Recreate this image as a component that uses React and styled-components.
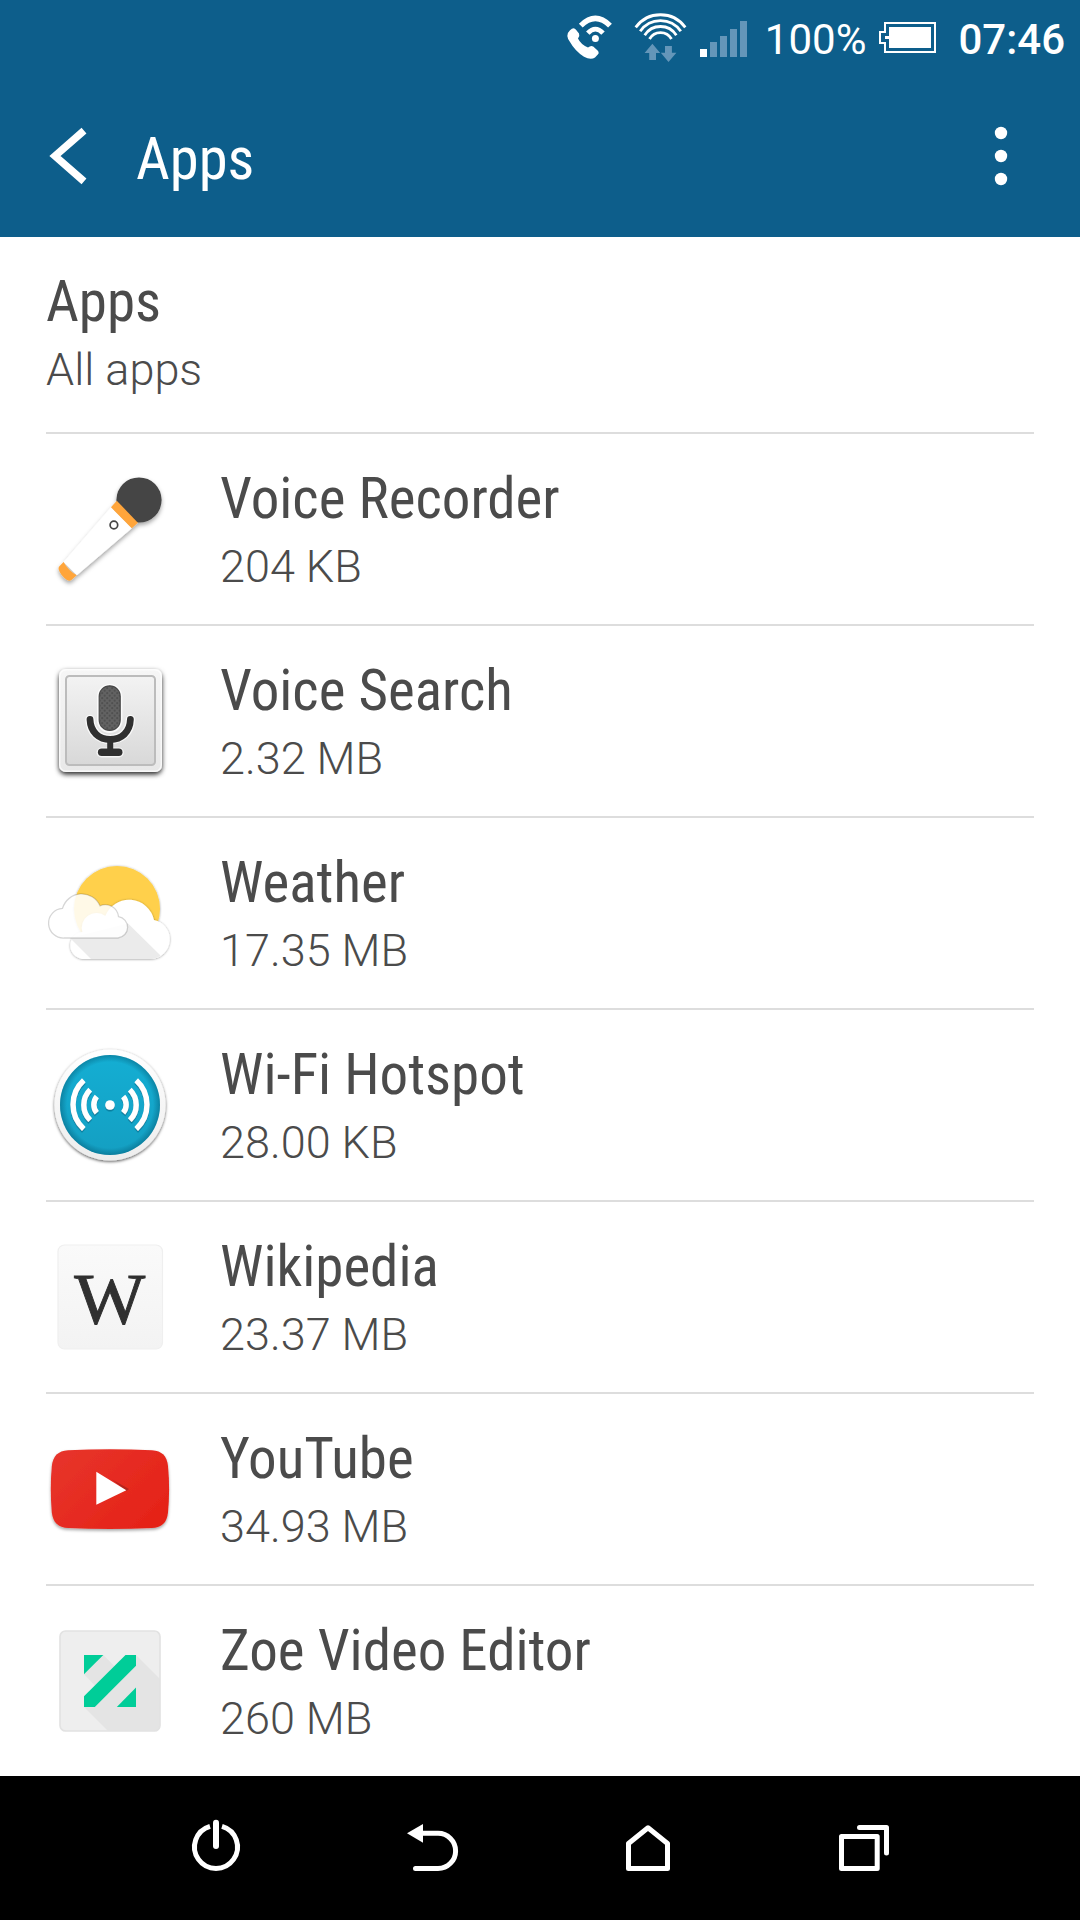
import React from 'react'
import styled, {createGlobalStyle} from 'styled-components'

const GlobalStyle = createGlobalStyle`
  * {
    box-sizing: border-box;
  }

  body {
    margin: 0;
    background: #fff;
    font-family: Roboto, "Liberation Sans", sans-serif;
    color: #4b4b4b;
  }

  svg {
    display: block;
    flex: none;
  }
`

const Screen = styled.div`
  width: 1080px;
  height: 1920px;
  display: flex;
  flex-direction: column;
  overflow: hidden;
`

const Header = styled.header`
  height: 237px;
  background: #0d5e8b;
  color: #fff;
`

const StatusBar = styled.div`
  height: 76px;
  display: flex;
  align-items: center;
  justify-content: flex-end;
  padding-right: 15px;
`

const StatusIcon = styled.svg`
  width: ${p => p.$w}px;
  height: 52px;
  margin-right: ${p => p.$gap}px;
`

const StatusText = styled.span`
  font-size: 42px;
  line-height: 50px;
  font-weight: ${p => p.$weight || 400};
  margin: 3px ${p => p.$gap || 0}px 0 0;
`

const ActionBar = styled.div`
  height: 160px;
  display: flex;
  align-items: center;
  padding: 0 69px 0 47px;
`

// narrow display face used for all titles
const Condensed = styled.div`
  font-family: "Roboto Condensed", Roboto, sans-serif;
  font-stretch: 75%;
  font-size: ${p => p.$size}px;
  line-height: 60px;
  white-space: nowrap;
`

const BarTitle = styled(Condensed)`
  flex: 1;
  margin: 5px 0 0 45px;
`

const List = styled.main`
  height: 1539px;
  padding: 0 46px;
`

const Row = styled.section`
  height: ${p => p.$head ? 197 : 192}px;
  display: flex;
  align-items: flex-start;
  border-bottom: 2px solid #dddddd;

  &:last-child {
    height: 190px;
    border-bottom: none;
  }
`

const AppIcon = styled.svg`
  width: 128px;
  height: 128px;
  margin: 31px 46px 0 0;
  overflow: visible;
`

const Texts = styled.div`
  padding-top: 35px;
`

const Sub = styled.div`
  font-size: 45px;
  line-height: 50px;
  font-weight: 300;
  margin-top: 13px;
`

const NavBar = styled.nav`
  height: 144px;
  background: #000;
  display: flex;
  padding: 0 108px;
`

const NavButton = styled.div`
  width: 216px;
  display: flex;
  align-items: center;
  justify-content: center;
`

const NavSvg = styled.svg`
  width: 64px;
  height: 64px;
  fill: none;
  stroke: #fff;
  stroke-width: 5;
  stroke-linejoin: round;
`

const VoiceRecorder = () => (
	<AppIcon viewBox="0 0 128 128">
		<defs>
			<filter id="micShadow" x="-20%" y="-20%" width="140%" height="150%">
				<feDropShadow dx="0" dy="2.5" stdDeviation="2" floodColor="#000" floodOpacity="0.36"/>
			</filter>
		</defs>
		<g filter="url(#micShadow)">
			<circle cx="93" cy="35" r="22.6" fill="#454545"/>
			<path d="M65 42.3L85.8 63.3L30.8 110.3L17.6 97Z" fill="#fff"/>
			<path d="M70.8 35.7L91.9 57.7L85.8 63.3L65 42.3Z" fill="#ffa53b"/>
			<path d="M17.6 97Q22.5 106 30.8 110.3L25.4 115Q23.4 116.4 21 115Q14.5 110.5 12.6 104.3Q12.3 102.5 13.4 101.3Z" fill="#ffa53b"/>
		</g>
		<circle cx="67.9" cy="60" r="3.8" fill="none" stroke="#454545" strokeWidth="1.7"/>
	</AppIcon>
)

const VoiceSearch = () => (
	<AppIcon viewBox="0 0 128 128">
		<defs>
			<linearGradient id="vsFace" x1="0" y1="0" x2="0" y2="1">
				<stop offset="0" stopColor="#f3f3f3"/>
				<stop offset="1" stopColor="#d8d8d8"/>
			</linearGradient>
			<linearGradient id="vsFrame" x1="0" y1="0" x2="0" y2="1">
				<stop offset="0" stopColor="#f6f6f6"/>
				<stop offset="1" stopColor="#e8e8e8"/>
			</linearGradient>
			<pattern id="vsMesh" width="5" height="5" patternUnits="userSpaceOnUse">
				<rect width="5" height="5" fill="#626262"/>
				<circle cx="1.2" cy="1.2" r="1.1" fill="#505050"/>
				<circle cx="3.7" cy="3.7" r="1.1" fill="#505050"/>
			</pattern>
			<filter id="vsShadow" x="-20%" y="-20%" width="140%" height="140%">
				<feDropShadow dx="0" dy="2.4" stdDeviation="2.8" floodColor="#000" floodOpacity="0.85"/>
			</filter>
		</defs>
		<rect x="13" y="12" width="103" height="103" rx="7" fill="url(#vsFrame)" filter="url(#vsShadow)"/>
		<rect x="13.7" y="12.7" width="101.6" height="101.6" rx="6.5" fill="none" stroke="#fff" strokeOpacity="0.7" strokeWidth="1.4"/>
		<rect x="20" y="19" width="89" height="89" rx="3.5" fill="url(#vsFace)" stroke="#bcbcbc" strokeWidth="2"/>
		<g fill="none" stroke="#fff" strokeOpacity="0.75" strokeLinecap="round">
			<path d="M44 62.5C44.5 75 53 82.5 64.2 82.5C75.4 82.5 84 75 84.4 62.5" strokeWidth="9.5"/>
			<path d="M55.5 95.5H72.8" strokeWidth="10"/>
		</g>
		<rect x="51" y="27" width="25.4" height="49" rx="12.7" fill="#fff" fillOpacity="0.8"/>
		<rect x="53.2" y="28.8" width="21" height="44.6" rx="10.5" fill="url(#vsMesh)" stroke="#484848" strokeWidth="1.2"/>
		<g fill="none" stroke="#303030" strokeLinecap="round">
			<path d="M44 62.5C44.5 75 53 82.5 64.2 82.5C75.4 82.5 84 75 84.4 62.5" strokeWidth="6.8"/>
			<path d="M64.2 83V94" strokeWidth="6" strokeLinecap="butt"/>
			<path d="M55.6 95.3H72.8" strokeWidth="7.4"/>
		</g>
	</AppIcon>
)

const Weather = () => (
	<AppIcon viewBox="0 0 128 128">
		<defs>
			<filter id="cloudShadow" x="-20%" y="-20%" width="140%" height="140%">
				<feDropShadow dx="0" dy="0.4" stdDeviation="0.9" floodColor="#000" floodOpacity="0.4"/>
			</filter>
		</defs>
		<circle cx="71" cy="60" r="43" fill="#ffd04b" filter="url(#cloudShadow)"/>
		<path
			d="M36 110A13.6 13.6 0 0 1 36.5 83A14.6 14.6 0 0 1 59.3 67A25.5 25.5 0 0 1 108 71A19.7 19.7 0 0 1 105 110Z"
			fill="#fff"
			filter="url(#cloudShadow)"
		/>
		<path d="M24 89L45 109.9H105Q110.5 109.8 114.5 106.5L82 74.5Z" fill="#ebebeb"/>
		<path
			d="M18.3 89A14.7 14.7 0 0 1 16.5 59.4A20 20 0 0 1 54 56.8A13.2 13.2 0 0 1 72.5 67.6A10.8 10.8 0 0 1 72 89Z"
			fill="#fff"
			fillOpacity="0.87"
			stroke="#000"
			strokeOpacity="0.16"
			strokeWidth="1.3"
		/>
	</AppIcon>
)

const Hotspot = () => (
	<AppIcon viewBox="0 0 128 128">
		<defs>
			<linearGradient id="hsFill" x1="0" y1="0" x2="0" y2="1">
				<stop offset="0" stopColor="#14aed3"/>
				<stop offset="1" stopColor="#149fc2"/>
			</linearGradient>
			<radialGradient id="hsEdge">
				<stop offset="0.86" stopColor="#00506a" stopOpacity="0"/>
				<stop offset="1" stopColor="#00506a" stopOpacity="0.42"/>
			</radialGradient>
			<linearGradient id="hsRing" x1="0" y1="0" x2="0" y2="1">
				<stop offset="0" stopColor="#fff"/>
				<stop offset="1" stopColor="#ededed"/>
			</linearGradient>
			<filter id="hsShadow" x="-20%" y="-20%" width="140%" height="140%">
				<feDropShadow dx="0" dy="1.2" stdDeviation="1.8" floodColor="#000" floodOpacity="0.65"/>
			</filter>
			<filter id="hsGlyph" x="-20%" y="-20%" width="140%" height="140%">
				<feDropShadow dx="0" dy="1.6" stdDeviation="0.6" floodColor="#005a78" floodOpacity="0.6"/>
			</filter>
		</defs>
		<circle cx="64" cy="64" r="55.6" fill="url(#hsRing)" filter="url(#hsShadow)"/>
		<circle cx="64" cy="64" r="50" fill="url(#hsFill)"/>
		<circle cx="64" cy="64" r="50" fill="url(#hsEdge)"/>
		<g filter="url(#hsGlyph)" fill="none" stroke="#fff" strokeWidth="5.4">
			<path d="M37.8 39.2A33 33 0 0 0 37.8 88"/>
			<path d="M44.2 48.6A21.5 21.5 0 0 0 44.2 79.2"/>
			<path d="M50.8 55.6A12.5 12.5 0 0 0 50.8 71.8"/>
			<path d="M90.2 39.2A33 33 0 0 1 90.2 88"/>
			<path d="M83.8 48.6A21.5 21.5 0 0 1 83.8 79.2"/>
			<path d="M77.2 55.6A12.5 12.5 0 0 1 77.2 71.8"/>
			<circle cx="64" cy="64" r="4.8" fill="#fff" stroke="none"/>
		</g>
	</AppIcon>
)

const Wikipedia = () => (
	<AppIcon viewBox="0 0 128 128">
		<defs>
			<linearGradient id="wkFill" x1="0" y1="0" x2="0" y2="1">
				<stop offset="0" stopColor="#fafafa"/>
				<stop offset="1" stopColor="#f3f3f3"/>
			</linearGradient>
		</defs>
		<rect x="12" y="12" width="104.5" height="104" rx="6.5" fill="url(#wkFill)" stroke="#efefef" strokeWidth="1.2"/>
		<text
			x="28.3"
			y="90"
			fontFamily="'Liberation Serif', serif"
			fontSize="72"
			textLength="71"
			lengthAdjust="spacingAndGlyphs"
			fill="#303030"
			stroke="#303030"
			strokeWidth="0.9"
		>W</text>
	</AppIcon>
)

const YouTube = () => (
	<AppIcon viewBox="0 0 128 128">
		<defs>
			<linearGradient id="ytFill" x1="0" y1="0" x2="1" y2="0.7">
				<stop offset="0" stopColor="#e7352c"/>
				<stop offset="1" stopColor="#e52318"/>
			</linearGradient>
			<filter id="ytShadow" x="-20%" y="-20%" width="140%" height="150%">
				<feDropShadow dx="0" dy="1.8" stdDeviation="1.6" floodColor="#000" floodOpacity="0.35"/>
			</filter>
		</defs>
		<path
			d="M22 25.3Q64 23.4 106 25.3C116 26 121 31 122 41Q124.2 64 122 87.5C121 97.5 116 102.5 106 103.1Q64 105 22 103.1C12 102.5 7 97.5 5.8 87.5Q3.8 64 5.8 41C7 31 12 26 22 25.3Z"
			fill="url(#ytFill)"
			filter="url(#ytShadow)"
		/>
		<path d="M66 54.5L83 64L80.5 66Z" fill="#b3251d"/>
		<path d="M50.3 46.7L80.3 65.2L50.3 79.8Z" fill="#fff"/>
	</AppIcon>
)

const Zoe = () => (
	<AppIcon viewBox="0 0 128 128">
		<rect x="14" y="14" width="100" height="100" rx="5.5" fill="#eeeeee"/>
		<path d="M90 38L114 62V108.5Q114 114 108.5 114H62L38 90Z" fill="#e4e4e4"/>
		<path d="M57.3 38L68.5 49.2L49 68.7L38 57.3Z" fill="#e4e4e4"/>
		<rect x="14" y="14" width="100" height="100" rx="5.5" fill="none" stroke="#e2e2e2" strokeWidth="1.6"/>
		<g fill="#00cd98">
			<path d="M38 38H57.3L38 57.3Z"/>
			<path d="M79.5 38H90V48.8L48.8 90H38V79.3Z"/>
			<path d="M90 70.6V90H70.8Z"/>
		</g>
	</AppIcon>
)

const apps = [
	{name: 'Voice Recorder', size: '204 KB', Icon: VoiceRecorder},
	{name: 'Voice Search', size: '2.32 MB', Icon: VoiceSearch},
	{name: 'Weather', size: '17.35 MB', Icon: Weather},
	{name: 'Wi-Fi Hotspot', size: '28.00 KB', Icon: Hotspot},
	{name: 'Wikipedia', size: '23.37 MB', Icon: Wikipedia},
	{name: 'YouTube', size: '34.93 MB', Icon: YouTube},
	{name: 'Zoe Video Editor', size: '260 MB', Icon: Zoe}
]

const Status = () => (
	<StatusBar>
		<StatusIcon $w={50} $gap={20} viewBox="0 0 50 52">
			<path
				d="M6 18.2Q9.8 14.4 12 17.8L15 21.6Q16 23.6 14 26.4Q16.5 32 24 35.5Q26.8 33 29.2 34.4L33.6 38.4Q35.6 40.6 33.8 42.6L31 45.4Q27 48.6 20 44.8Q11 39 6 30Q0.8 23 6 18.2Z"
				fill="#fff"
			/>
			<g fill="none" stroke="#fff">
				<path d="M16.8 13.6Q31.4 -0.8 46 13.6" strokeWidth="5.4"/>
				<path d="M23.8 21.2Q31.4 13.2 39 21.2" strokeWidth="4.8"/>
			</g>
			<circle cx="31.4" cy="26.6" r="3.5" fill="#fff"/>
		</StatusIcon>
		<StatusIcon $w={54} $gap={12} viewBox="0 0 54 52">
			<g fill="none" stroke="#fff" strokeWidth="2.8">
				<path d="M1.7 15.4A30.6 30.6 0 0 1 51.3 15.4"/>
				<path d="M6.2 19.3A24.6 24.6 0 0 1 46.8 19.3"/>
				<path d="M10.7 23.2A18.7 18.7 0 0 1 42.3 23.2"/>
				<path d="M15.5 27A12.6 12.6 0 0 1 37.5 27"/>
			</g>
			<g fill="#6496b9">
				<path d="M18.4 31.7L26.2 41H22V48H15.2V41H10.6Z"/>
				<path d="M34.5 50L26.8 40.7H31V34H37.9V40.7H42.4Z"/>
			</g>
		</StatusIcon>
		<StatusIcon $w={48} $gap={17} viewBox="0 0 48 52">
			<path d="M0 37H7V45H0Z" fill="#fff"/>
			<path d="M10 30H17V45H10ZM20 24H27V45H20ZM30 17H37V45H30ZM40 9H47V45H40Z" fill="#6496b9"/>
		</StatusIcon>
		<StatusText $gap={13}>100%</StatusText>
		<StatusIcon $w={58} $gap={21} viewBox="0 0 58 52">
			<path d="M6 11H56V40H6V31H1V20H6Z" fill="none" stroke="#fff" strokeWidth="2"/>
			<path d="M10 15H52V36H10V27H6V24H10Z" fill="#fff"/>
		</StatusIcon>
		<StatusText $weight={500}>07:46</StatusText>
	</StatusBar>
)

export default function App() {
	return (
		<Screen>
			<GlobalStyle/>
			<Header>
				<Status/>
				<ActionBar>
					<svg width="44" height="60" viewBox="0 0 44 60">
						<path d="M37 4.6L8 30L37 55.4" fill="none" stroke="#fff" strokeWidth="7.4"/>
					</svg>
					<BarTitle $size={58.6}>Apps</BarTitle>
					<svg width="20" height="64" viewBox="0 0 20 64" fill="#fff">
						<circle cx="10" cy="9" r="6.2"/>
						<circle cx="10" cy="32" r="6.2"/>
						<circle cx="10" cy="55" r="6.2"/>
					</svg>
				</ActionBar>
			</Header>

			<List>
				<Row $head>
					<Texts>
						<Condensed $size={57}>Apps</Condensed>
						<Sub>All apps</Sub>
					</Texts>
				</Row>
				{apps.map(({name, size, Icon}) => (
					<Row key={name}>
						<Icon/>
						<Texts>
							<Condensed $size={57}>{name}</Condensed>
							<Sub>{size}</Sub>
						</Texts>
					</Row>
				))}
			</List>

			<NavBar>
				<NavButton>
					<NavSvg viewBox="0 0 64 64">
						<path d="M26 10.3A21.5 21.5 0 1 0 38 10.3"/>
						<path d="M32 6.8V30" strokeWidth="6" strokeLinecap="round"/>
					</NavSvg>
				</NavButton>
				<NavButton>
					<NavSvg viewBox="0 0 64 64">
						<path d="M22 17.3H38A17.6 17.6 0 0 1 38 52.5H15.5" strokeLinecap="round"/>
						<path d="M7 17.3L23 8V26.8Z" fill="#fff" stroke="none"/>
					</NavSvg>
				</NavButton>
				<NavButton>
					<NavSvg viewBox="0 0 64 64">
						<path d="M12.5 27.5L32 11.8L51.5 27.5V52.5H12.5Z"/>
					</NavSvg>
				</NavButton>
				<NavButton>
					<NavSvg viewBox="0 0 64 64">
						<path d="M9.5 20.5H45.2V52.5H9.5Z"/>
						<path d="M27.5 11.5H54.5V37" strokeLinecap="round"/>
					</NavSvg>
				</NavButton>
			</NavBar>
		</Screen>
	)
}
